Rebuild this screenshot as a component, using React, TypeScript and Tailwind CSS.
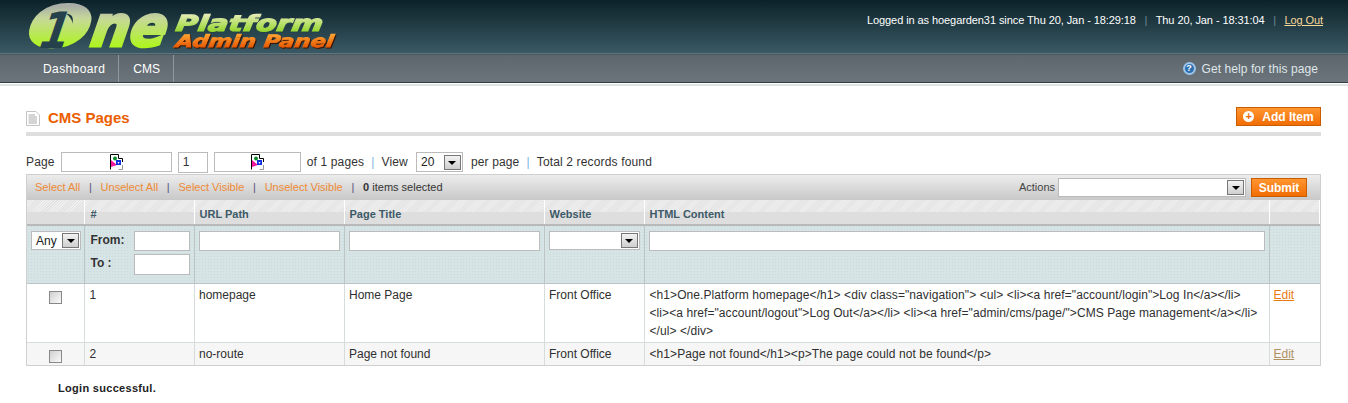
import React from "react";

const font = { fontFamily: '"Liberation Sans", Arial, sans-serif' };

function BrokenImg() {
  return (
    <svg width="14" height="16" viewBox="0 0 14 16" aria-hidden="true">
      <path d="M1.5 .5H9.5L13.5 4.5V15.5H1.5Z" fill="#fff" />
      <path d="M1.5 15.5V.5H9.5M9.5 .5V4.5H13.5V8" fill="none" stroke="#000" />
      <path d="M9.5 15.5H13.5V11" fill="none" stroke="#999" />
      <circle cx="6" cy="4.5" r="2" fill="#0a8a2a" />
      <path d="M2 6 L8 11 L2 13Z" fill="#f0189c" />
      <rect x="7" y="6" width="5" height="5" fill="#1030e0" />
      <path d="M8.5 8l2 0-1 2z" fill="#fff" />
    </svg>
  );
}

function Arrow() {
  return (
    <span className="flex h-[15px] w-[17px] shrink-0 items-center justify-center border border-[#777] bg-[linear-gradient(#f2f2f2,#cfcfcf)]">
      <span className="mt-px h-0 w-0 border-x-[4px] border-t-[4px] border-x-transparent border-t-black" />
    </span>
  );
}

function Select({ value, className }: { value?: string; className: string }) {
  return (
    <div className={`flex h-[19px] items-center justify-between border border-[#bbb] bg-white pr-px pl-[4px] text-[12px] text-[#222] ${className}`}>
      <span>{value}</span>
      <Arrow />
    </div>
  );
}

function Check() {
  return (
    <span className="mx-auto block h-[13px] w-[13px] border border-[#888] bg-[linear-gradient(135deg,#d0d0d0,#fafafa)]" />
  );
}

function Sep({ className }: { className: string }) {
  return <span className={className}>|</span>;
}

const barSep = "mx-[8.75px] text-[#56507a]";
const pageSep = "mx-[7px] text-[#7fb2e0]";
const topSep = "mx-[8.5px] text-[#6f8992]";

const inputCls = "block h-[20px] w-full border border-[#bbb] bg-white px-1 text-[12px] outline-none";
const headCell =
  "border-r border-r-white border-b-2 border-b-[#b9b9b9] px-[5px] pt-[6px] pb-0 text-left align-top text-[11px] font-bold text-[#3d5a68] bg-[linear-gradient(#0000_0_12px,#dedede_12px),repeating-linear-gradient(135deg,#efefef_0_1px,#e3e3e3_1px_2px)]";
const filterCell = "border-r border-r-[#bcc4c4] px-[4px] pt-[5px] align-top";
const cell = "border-r border-r-[#d6dcdc] pr-[4px] pl-[4.5px] pt-[2px] pb-[2px] align-top text-[12px] leading-[18px] text-[#2f2f2f]";
const checkCell = "border-r border-r-[#d6dcdc] px-[4px] pt-[7px] pb-[2px] align-top";

function Logo() {
  const face = { fontFamily: '"DejaVu Sans", sans-serif', fontWeight: 700, fontStyle: "italic" } as const;
  return (
    <svg width="320" height="52" viewBox="0 0 320 52" role="img" aria-label="One Platform Admin Panel">
      <defs>
        <linearGradient id="g0" gradientUnits="userSpaceOnUse" x1="0" y1="6" x2="0" y2="47">
          <stop offset="0" stopColor="#a9aea6" />
          <stop offset=".3" stopColor="#c6d89a" />
          <stop offset="1" stopColor="#aef51e" />
        </linearGradient>
        <linearGradient id="g1" gradientUnits="userSpaceOnUse" x1="0" y1="-40" x2="0" y2="1">
          <stop offset="0" stopColor="#a9aea6" />
          <stop offset=".3" stopColor="#c6d89a" />
          <stop offset="1" stopColor="#aef51e" />
        </linearGradient>
        <linearGradient id="g2" gradientUnits="userSpaceOnUse" x1="0" y1="-17" x2="0" y2="1">
          <stop offset="0" stopColor="#e6ecb8" />
          <stop offset="1" stopColor="#93d62a" />
        </linearGradient>
        <linearGradient id="g3" gradientUnits="userSpaceOnUse" x1="0" y1="-13" x2="0" y2="0">
          <stop offset="0" stopColor="#ffa634" />
          <stop offset="1" stopColor="#e85a05" />
        </linearGradient>
      </defs>
      <g style={face}>
        <ellipse cx="32" cy="27" rx="15" ry="16" fill="url(#g0)" />
        <text transform="translate(0,46) skewX(-9)" fontSize="56" fill="url(#g1)" stroke="url(#g1)" strokeWidth="3" textLength="62" lengthAdjust="spacingAndGlyphs">
          O
        </text>
        <text transform="translate(63,46) skewX(-9)" fontSize="56" fill="url(#g1)" stroke="url(#g1)" strokeWidth="3" textLength="76" lengthAdjust="spacingAndGlyphs">
          ne
        </text>
        <text transform="translate(12,48) skewX(-10)" fontSize="50" fill="#25424c" textLength="30" lengthAdjust="spacingAndGlyphs">
          1
        </text>
        <g className="drop-shadow-[1px_1px_0_#26404a]">
          <text transform="translate(149,31) skewX(-8)" fontSize="22" fill="url(#g2)" stroke="url(#g2)" strokeWidth="1.2" textLength="147" lengthAdjust="spacingAndGlyphs">
            Platform
          </text>
        </g>
        <g className="drop-shadow-[1px_1px_0_#3a1500]">
          <text transform="translate(149,47) skewX(-8)" fontSize="17" fill="url(#g3)" stroke="url(#g3)" strokeWidth=".8" textLength="158" lengthAdjust="spacingAndGlyphs">
            Admin Panel
          </text>
        </g>
      </g>
    </svg>
  );
}

export default function App() {
  return (
    <div className="min-h-[403px] w-[1348px] overflow-hidden bg-white" style={font}>
      <header className="flex h-[53px] items-start justify-between bg-[linear-gradient(#0c2229,#3a5964)] pr-[25px] pl-[26px]">
        <Logo />
        <div className="pt-[13px] text-[11px] leading-[15px] tracking-[-0.08px] text-white">
          Logged in as hoegarden31 since Thu 20, Jan - 18:29:18
          <Sep className={topSep} />
          Thu 20, Jan - 18:31:04
          <Sep className={topSep} />
          <a className="text-[#f7d89a] underline">Log Out</a>
        </div>
      </header>
      <div className="h-[2px] bg-[linear-gradient(#6b828a,#3a4c53)]" />
      <nav className="flex h-[28px] items-stretch justify-between border-b border-b-[#2f3c42] bg-[linear-gradient(#5d666c,#6c757b)] pr-[30px] pl-[29px]">
        <div className="flex text-[12px] text-white">
          <a className="flex items-center border-r border-r-[#8f989c] pr-[13px] pl-[14px] tracking-[0.4px]">Dashboard</a>
          <a className="flex items-center border-r border-r-[#8f989c] pr-[13px] pl-[14px]">CMS</a>
        </div>
        <a className="flex items-center gap-[6px] text-[12px] tracking-[0.08px] text-[#dfe6ea]">
          <span className="flex h-[13px] w-[13px] items-center justify-center rounded-full border-2 border-[#9cc4ea] bg-[#2f6fae] text-[9px] leading-none font-bold text-white">?</span>
          Get help for this page
        </a>
      </nav>
      <div className="mt-px h-[2px] bg-[#dfe3e3]" />

      <main className="px-[26px] pr-[27px]">
        <div className="mt-[21px] flex items-end justify-between border-b-4 border-b-[#dedede] pb-[6px]">
          <h1 className="flex items-center gap-[8px] pt-[1px] text-[15px] leading-[16px] font-bold text-[#eb5e00]">
            <svg width="14" height="15" viewBox="0 0 14 15" aria-hidden="true">
              <path d="M.5.5H10L13.5 4V14.5H.5Z" fill="#fff" stroke="#c4c4c4" />
              <path d="M2.5 4H9M2.5 6H11M2.5 8H11M2.5 10H11M2.5 12H11" stroke="#aaa" />
            </svg>
            CMS Pages
          </h1>
          <button className="flex h-[19px] w-[85px] items-center justify-center gap-[8px] border border-[#c75c00] bg-[linear-gradient(#ff9630,#f26d05)] text-[12px] font-bold text-white">
            <span className="flex h-[11px] w-[11px] items-center justify-center rounded-full bg-white text-[11px] leading-none font-bold text-[#e76a08]">+</span>
            Add Item
          </button>
        </div>

        <div className="mt-[15px] mb-px flex h-[22px] items-center text-[12px] tracking-[0.15px] text-[#333]">
          <span className="mr-[6px]">Page</span>
          <span className="mr-[6px] flex h-[20px] w-[111px] items-center justify-center border border-[#bbb]"><BrokenImg /></span>
          <input readOnly value="1" className="mr-[6px] h-[21px] w-[30px] border border-[#bbb] px-[4px] text-[12px] outline-none" />
          <span className="mr-[6px] flex h-[20px] w-[87px] items-center justify-center border border-[#bbb]"><BrokenImg /></span>
          of 1 pages
          <Sep className={pageSep} />
          <span className="mr-[8px]">View</span>
          <Select value="20" className="mr-[8px] h-[20px] w-[47px] border-[#999]" />
          per page
          <Sep className={pageSep} />
          Total 2 records found
        </div>

        <div className="border border-[#cfcfcf]">
          <div className="flex h-[25px] items-center justify-between bg-[linear-gradient(#ececec,#c8c8c8)] pr-[13px] pl-[8px] text-[11px]">
            <div className="flex items-center text-[#ee8a35]">
              Select All<Sep className={barSep} />Unselect All<Sep className={barSep} />Select Visible<Sep className={barSep} />Unselect Visible<Sep className={barSep} />
              <span className="text-[#333]"><b>0</b> items selected</span>
            </div>
            <div className="flex items-center text-[#444]">
              <span className="mr-[3px]">Actions</span>
              <Select className="mr-[5px] w-[188px] border-[#aaa]" />
              <button className="h-[19px] w-[56px] border border-[#c75c00] bg-[linear-gradient(#ff9630,#f26d05)] text-[12px] font-bold text-white">Submit</button>
            </div>
          </div>
          <table className="w-full table-fixed border-collapse">
            <colgroup>
              <col className="w-[57px]" />
              <col className="w-[110px]" />
              <col className="w-[150px]" />
              <col className="w-[200px]" />
              <col className="w-[100px]" />
              <col className="w-[625px]" />
              <col />
            </colgroup>
            <thead>
              <tr className="h-[25px]">
                <th className={headCell} />
                <th className={`${headCell} pl-[6px]`}>#</th>
                <th className={headCell}>URL Path</th>
                <th className={headCell}>Page Title</th>
                <th className={headCell}>Website</th>
                <th className={headCell}>HTML Content</th>
                <th className={headCell} />
              </tr>
              <tr className="h-[58px] border-b border-b-[#bcc4c4] bg-[#d7e4e6] bg-[radial-gradient(#cad9dc_1px,#0000_1px)] bg-[length:3px_3px]">
                <td className={filterCell}>
                  <Select value="Any" className="h-[19px] w-[50px] border-[#999]" />
                </td>
                <td className={filterCell}>
                  <div className="flex h-[23px] items-start justify-between pl-[2px] text-[12px] font-bold text-[#333]">
                    <span>From:</span>
                    <input className="h-[20px] w-[56px] border border-[#bbb] bg-white outline-none" />
                  </div>
                  <div className="flex items-start justify-between pl-[2px] text-[12px] font-bold text-[#333]">
                    <span>To :</span>
                    <input className="h-[21px] w-[56px] border border-[#bbb] bg-white outline-none" />
                  </div>
                </td>
                <td className={filterCell}><input className={inputCls} /></td>
                <td className={filterCell}><input className={inputCls} /></td>
                <td className={filterCell}><Select className="h-[19px] w-[91px] border-[#aaa]" /></td>
                <td className={filterCell}><input className={inputCls} /></td>
                <td className="px-[4px]" />
              </tr>
            </thead>
            <tbody>
              <tr className="border-b border-b-[#d6dcdc] bg-white">
                <td className={checkCell}><Check /></td>
                <td className={`${cell} pl-[5px]`}>1</td>
                <td className={cell}>homepage</td>
                <td className={cell}>Home Page</td>
                <td className={cell}>Front Office</td>
                <td className={`${cell} pr-[8px] pl-[5px] text-[11px] tracking-[0.08px]`}>
                  &lt;h1&gt;One.Platform homepage&lt;/h1&gt; &lt;div class="navigation"&gt; &lt;ul&gt; &lt;li&gt;&lt;a href="account/login"&gt;Log In&lt;/a&gt;&lt;/li&gt; &lt;li&gt;&lt;a href="account/logout"&gt;Log Out&lt;/a&gt;&lt;/li&gt; &lt;li&gt;&lt;a href="admin/cms/page/"&gt;CMS Page management&lt;/a&gt;&lt;/li&gt; &lt;/ul&gt; &lt;/div&gt;
                </td>
                <td className="px-[4px] pt-[2px] align-top text-[12px] leading-[18px] text-[#ea7a12] underline">Edit</td>
              </tr>
              <tr className="bg-[#f6f6f6]">
                <td className={checkCell}><Check /></td>
                <td className={`${cell} pl-[5px]`}>2</td>
                <td className={cell}>no-route</td>
                <td className={cell}>Page not found</td>
                <td className={cell}>Front Office</td>
                <td className={`${cell} pl-[5px] text-[11px] tracking-[0.08px]`}>&lt;h1&gt;Page not found&lt;/h1&gt;&lt;p&gt;The page could not be found&lt;/p&gt;</td>
                <td className="px-[4px] pt-[2px] pb-[2px] align-top text-[12px] leading-[18px] text-[#b09060] underline">Edit</td>
              </tr>
            </tbody>
          </table>
        </div>
        <p className="mt-[15px] pl-[32px] text-[11px] leading-[15px] font-bold tracking-[0.3px] text-[#222]">Login successful.</p>
      </main>
    </div>
  );
}
